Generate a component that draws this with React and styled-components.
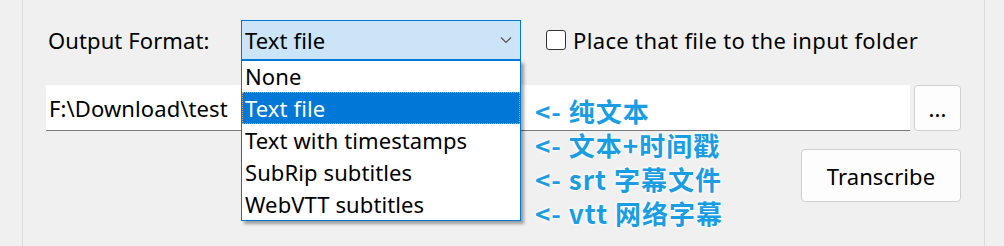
import React from "react"
import styled, { createGlobalStyle } from "styled-components"

const Global = createGlobalStyle`
  html, body {
    margin: 0;
    padding: 0;
    background: #f0f0f0;
  }
  body {
    font-family: "Noto Sans", "Open Sans", sans-serif;
    font-size: 22px;
    letter-spacing: 0.1px;
    color: #000;
  }
`

const Page = styled.div`
  width: 1004px;
  height: 246px;
  overflow: hidden;
  background: #f0f0f0;
`

const Panel = styled.div`
  position: relative;
  margin-left: 22px;
  width: 963px;
  height: 246px;
  box-sizing: border-box;
  border-left: 1px solid #dadada;
  border-right: 1px solid #dadada;
  padding: 20px 23px 0 23px;
`

const Row = styled.div`
  display: flex;
  align-items: center;
  height: ${(p) => p.h}px;
  margin-top: ${(p) => p.mt || 0}px;
  justify-content: ${(p) => (p.end ? "flex-end" : "flex-start")};
`

const Label = styled.span`
  width: 195px;
  padding-left: 2px;
  box-sizing: border-box;
`

const ComboWrap = styled.div`
  position: relative;
  width: 280px;
  height: 40px;
`

const Combo = styled.div`
  display: flex;
  align-items: center;
  justify-content: space-between;
  height: 40px;
  box-sizing: border-box;
  border: 1px solid #0078d7;
  background: #cce4f7;
  padding: 0 8px 0 3px;
`

const List = styled.ul`
  position: absolute;
  top: 40px;
  left: 0;
  width: 280px;
  margin: 0;
  padding: 0;
  list-style: none;
  box-sizing: border-box;
  border: 1px solid #0078d7;
  background: #fff;
  box-shadow: 3px 3px 3px rgba(0, 0, 0, 0.35);
  z-index: 2;
`

const Item = styled.li`
  height: 32px;
  line-height: 32px;
  padding-left: 3px;
  background: ${(p) => (p.active ? "#0078d7" : "#fff")};
  color: ${(p) => (p.active ? "#fff" : "#000")};
  outline: ${(p) => (p.active ? "1px dotted #f0a050" : "none")};
  outline-offset: -1px;
  &:first-child {
    height: 31px;
    line-height: 31px;
  }
`

const Check = styled.label`
  display: flex;
  align-items: center;
  gap: 7px;
  margin-left: 25px;
  letter-spacing: 0.35px;
`

const Box = styled.span`
  width: 18px;
  height: 18px;
  border: 1px solid #333;
  border-radius: 3px;
  background: #fff;
`

const PathInput = styled.div`
  width: 864px;
  height: 46px;
  box-sizing: border-box;
  background: #fff;
  border-bottom: 1px solid #7a7a7a;
  padding: 0 3px;
  display: flex;
  align-items: center;
`

const Button = styled.button`
  width: ${(p) => p.w}px;
  height: ${(p) => p.h}px;
  margin-left: ${(p) => p.ml || 0}px;
  box-sizing: border-box;
  border: 1px solid #d0d0d0;
  border-radius: 4px;
  background: #fdfdfd;
  font: inherit;
  letter-spacing: inherit;
  color: #000;
  padding: 0;
`

const Notes = styled.div`
  position: absolute;
  left: 512px;
  top: 94px;
  display: flex;
  flex-direction: column;
  z-index: 3;
`

const Note = styled.span`
  height: 34px;
  line-height: 34px;
  font-family: "Noto Sans CJK SC", "Noto Sans", sans-serif;
  font-weight: 700;
  font-size: 26px;
  letter-spacing: 1px;
  color: #1a9de3;
  text-shadow: 0 0 2px #fff, 0 0 3px #fff, 0 0 4px #fff;
  white-space: pre;
`

function Chevron() {
  return (
    <svg width="12" height="8" viewBox="0 0 12 8">
      <path d="M1 1.5 L6 6.5 L11 1.5" fill="none" stroke="#555" strokeWidth="1.2" />
    </svg>
  )
}

const formats = ["None", "Text file", "Text with timestamps", "SubRip subtitles", "WebVTT subtitles"]
const notes = ["<- 纯文本", "<- 文本+时间戳", "<- srt 字幕文件", "<- vtt 网络字幕"]

export default function App() {
  return (
    <Page>
      <Global />
      <Panel>
        <Row h={40}>
          <Label>Output Format:</Label>
          <ComboWrap>
            <Combo>
              <span>Text file</span>
              <Chevron />
            </Combo>
            <List>
              {formats.map((f) => (
                <Item key={f} active={f === "Text file"}>{f}</Item>
              ))}
            </List>
          </ComboWrap>
          <Check>
            <Box />
            <span>Place that file to the input folder</span>
          </Check>
        </Row>
        <Row h={46} mt={25}>
          <PathInput>F:\Download\test</PathInput>
          <Button w={47} h={46} ml={4}>...</Button>
        </Row>
        <Row h={53} mt={18} end>
          <Button w={160} h={53}>Transcribe</Button>
        </Row>
        <Notes>
          {notes.map((n) => (
            <Note key={n}>{n}</Note>
          ))}
        </Notes>
      </Panel>
    </Page>
  )
}
